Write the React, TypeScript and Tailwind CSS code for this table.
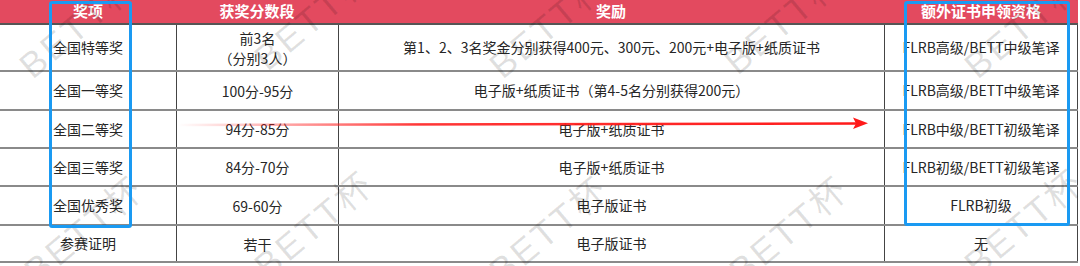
const rows = [
  { name: '全国特等奖', score: ['前3名', '（分别3人）'], reward: '第1、2、3名奖金分别获得400元、300元、200元+电子版+纸质证书', extra: 'FLRB高级/BETT中级笔译', h: 'h-[45px]' },
  { name: '全国一等奖', score: ['100分-95分'], reward: '电子版+纸质证书（第4-5名分别获得200元）', extra: 'FLRB高级/BETT中级笔译', h: 'h-[37px]' },
  { name: '全国二等奖', score: ['94分-85分'], reward: '电子版+纸质证书', extra: 'FLRB中级/BETT初级笔译', h: 'h-[36px]' },
  { name: '全国三等奖', score: ['84分-70分'], reward: '电子版+纸质证书', extra: 'FLRB初级/BETT初级笔译', h: 'h-[36px]' },
  { name: '全国优秀奖', score: ['69-60分'], reward: '电子版证书', extra: 'FLRB初级', h: 'h-[37px]' },
  { name: '参赛证明', score: ['若干'], reward: '电子版证书', extra: '无', h: 'h-[35px]' },
]

// watermark grid, 5 across, 2 down
const marks = [
  { x: 'left-[8px]', y: 'top-[-2px]' },
  { x: 'left-[243px]', y: 'top-[-10px]' },
  { x: 'left-[478px]', y: 'top-[-2px]' },
  { x: 'left-[713px]', y: 'top-[-6px]' },
  { x: 'left-[953px]', y: 'top-[-2px]' },
  { x: 'left-[13px]', y: 'top-[203px]' },
  { x: 'left-[243px]', y: 'top-[198px]' },
  { x: 'left-[478px]', y: 'top-[203px]' },
  { x: 'left-[718px]', y: 'top-[203px]' },
  { x: 'left-[953px]', y: 'top-[196px]' },
]

const cols = 'grid grid-cols-[176px_162px_546px_194px]'

export default function App() {
  return (
    <div className="relative w-[1080px] h-[266px] overflow-hidden bg-white text-[14px] text-[#262626]" style={{ fontFamily: '"Noto Sans CJK SC", "Noto Sans", sans-serif' }}>
      <div className="w-[1078px]">
        <div className={`${cols} h-[25px] bg-[#e34a5f] border-b-2 border-[#555] text-white font-bold text-[15px]`}>
          <div className="flex items-center justify-center">奖项</div>
          <div className="flex items-center justify-center">获奖分数段</div>
          <div className="flex items-center justify-center">奖励</div>
          <div className="flex items-center justify-center">额外证书申领资格</div>
        </div>
        {rows.map((r) => (
          <div key={r.name} className={`${cols} border-b-2 border-[#8a8a8a]`}>
            <div className={`${r.h} flex items-center justify-center`}>{r.name}</div>
            <div className="flex flex-col items-center justify-center border-l border-[#444] leading-[20px]">
              {r.score.map((s) => (
                <span key={s}>{s}</span>
              ))}
            </div>
            <div className="flex items-center justify-center border-l border-[#444]">{r.reward}</div>
            <div className="flex items-center justify-center border-l border-r border-[#444]">{r.extra}</div>
          </div>
        ))}
      </div>

      {marks.map((m, i) => (
        <span
          key={i}
          className={`absolute ${m.x} ${m.y} -rotate-[40deg] text-[36px] tracking-[3px] text-black/[0.12] pointer-events-none whitespace-nowrap`}
          style={{ fontFamily: '"Liberation Sans", "Noto Sans CJK SC", sans-serif' }}
        >
          BETT杯
        </span>
      ))}

      <svg className="absolute left-0 top-0 pointer-events-none" width="1080" height="266">
        <defs>
          <linearGradient id="arr" x1="178" y1="0" x2="868" y2="0" gradientUnits="userSpaceOnUse">
            <stop offset="0" stopColor="#ff2020" stopOpacity="0" />
            <stop offset="0.35" stopColor="#ff2020" stopOpacity="0.9" />
            <stop offset="1" stopColor="#ff1a1a" />
          </linearGradient>
        </defs>
        <line x1="178" y1="125" x2="858" y2="123.5" stroke="url(#arr)" strokeWidth="2.5" />
        <polygon points="868,123.3 853,117.5 856,123.5 853,129" fill="#ff1a1a" />
      </svg>

      <div className="absolute left-[49px] top-[1px] w-[83px] h-[227px] border-[3px] border-[#1a9af2] rounded-[3px]" />
      <div className="absolute left-[904px] top-[1px] w-[166px] h-[225px] border-[3px] border-[#1a9af2] rounded-[3px]" />
    </div>
  )
}
